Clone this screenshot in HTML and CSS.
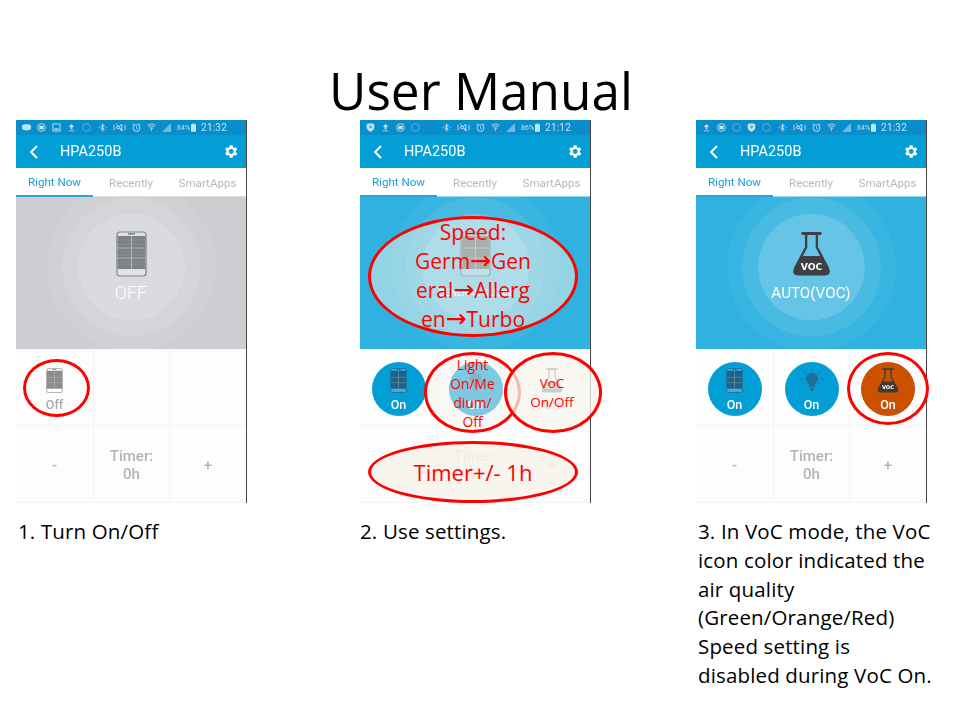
FILE: index.html
```html
<!DOCTYPE html>
<html lang="en">
<head>
<meta charset="utf-8">
<title>User Manual</title>
<link rel="stylesheet" href="styles.css">
</head>
<body>
<svg class="defs" aria-hidden="true">
  <symbol id="i-filter" viewBox="0 0 31 46">
    <rect x="1" y="1" width="29" height="44" rx="3" fill="#fff" fill-opacity=".2" stroke="currentColor" stroke-width="1.2"/>
    <rect x="1.6" y="5" width="27.8" height="33" fill="currentColor"/>
    <rect x="12" y="2" width="7" height="1.6" fill="currentColor"/>
    <path d="M15.5 5V38M1.5 17H29.5M1.5 27H29.5" stroke="#fff" stroke-opacity=".4" stroke-width="1.1" fill="none"/>
    <path d="M2 9H29M2 13H29M2 21H29M2 24H29M2 31H29M2 34H29" stroke="#fff" stroke-opacity=".1" stroke-width="1" fill="none"/>
  </symbol>
  <symbol id="i-flask" viewBox="0 0 40 46">
    <path d="M11 2H29" stroke="currentColor" stroke-width="3" stroke-linecap="round" fill="none"/>
    <path d="M14.5 3V16L3 38M25.5 3V16L37 38" stroke="currentColor" stroke-width="2.4" fill="none"/>
    <path d="M10 25H30L38.500 39Q40 45 34 45H6Q0 45 1.500 39Z" fill="currentColor"/>
    <text x="20" y="39.500" class="flask-text">VOC</text>
  </symbol>
  <symbol id="i-bulb" viewBox="0 0 26 26">
    <circle cx="13" cy="11" r="6.500" fill="currentColor"/>
    <path d="M10 15H16V20H10ZM11 21H15V24H11Z" fill="currentColor"/>
    <path d="M13 0V2.500M4.500 3L6.500 5M21.500 3L19.500 5M1 11H3.500M22.500 11H25M4 18L6 16.500M22 18L20 16.500" stroke="currentColor" stroke-width="1" fill="none"/>
  </symbol>
  <symbol id="i-gear" viewBox="0 0 24 24">
    <path fill="currentColor" d="M19.400 13a7.500 7.500 0 0 0 0-2l2.100-1.600-2-3.500-2.500 1a7.500 7.500 0 0 0-1.700-1L15 3.200h-4l-.4 2.700a7.500 7.500 0 0 0-1.700 1l-2.500-1-2 3.500L6.500 11a7.500 7.500 0 0 0 0 2l-2.100 1.600 2 3.500 2.500-1a7.500 7.500 0 0 0 1.700 1l.4 2.700h4l.4-2.700a7.500 7.500 0 0 0 1.700-1l2.500 1 2-3.500zM13 15.500a3.500 3.500 0 1 1 0-7 3.500 3.500 0 0 1 0 7z"/>
  </symbol>
  <symbol id="s-msg" viewBox="0 0 10 10"><rect x="0" y="1.500" width="10" height="6.500" rx="3" fill="currentColor"/></symbol>
  <symbol id="s-chat" viewBox="0 0 10 10"><circle cx="5" cy="5" r="4.300" fill="none" stroke="currentColor"/><rect x="2.500" y="3" width="5" height="4" rx="1" fill="currentColor"/></symbol>
  <symbol id="s-photo" viewBox="0 0 10 10"><rect x="1" y="1" width="8" height="8" fill="none" stroke="currentColor"/><rect x="2.500" y="6" width="5" height="1.500" fill="currentColor"/></symbol>
  <symbol id="s-up" viewBox="0 0 10 10"><path d="M5 1L8 4.500H6V7H4V4.500H2ZM2 8.200H8V9.300H2Z" fill="currentColor"/></symbol>
  <symbol id="s-ring" viewBox="0 0 10 10"><circle cx="5" cy="5" r="4.300" fill="none" stroke="currentColor" stroke-opacity=".45"/></symbol>
  <symbol id="s-shield" viewBox="0 0 10 10"><path d="M.8 1.200L5 .2 9.200 1.200V5Q9 8 5 9.800 1 8 .8 5Z" fill="currentColor"/><circle cx="5" cy="4.500" r="1.600" fill="#4ab0d8"/></symbol>
  <symbol id="s-bt" viewBox="0 0 10 10"><path d="M2.500 2.800L7 7 5 9V1L7 3 2.500 7.200" fill="none" stroke="currentColor" stroke-width="1"/><path d="M.5 5H1.500M8.500 5H9.500" stroke="currentColor"/></symbol>
  <symbol id="s-mute" viewBox="0 0 14 10"><path d="M1 2V8M13 2V8M3.500 1L11 9M4 4H6.500L9.500 1.500V8.500L6.500 6H4Z" fill="none" stroke="currentColor" stroke-width="1"/></symbol>
  <symbol id="s-alarm" viewBox="0 0 10 10"><circle cx="5" cy="5.500" r="3.800" fill="none" stroke="currentColor"/><path d="M5 3.500V5.800L6.500 6.800M.5 2L2.500 .5M9.500 2L7.500 .5" fill="none" stroke="currentColor" stroke-width=".9"/></symbol>
  <symbol id="s-wifi" viewBox="0 0 10 10"><path d="M.5 2.500Q5 -.8 9.500 2.500M2 4.300Q5 2.300 8 4.300M3.300 6Q5 4.800 6.700 6" fill="none" stroke="currentColor"/><path d="M4.200 6.500H5.800L5 9.800Z" fill="currentColor"/></symbol>
  <symbol id="s-signal" viewBox="0 0 10 10"><path d="M10 0V10H0Z" fill="currentColor" fill-opacity=".55"/></symbol>
  <symbol id="s-batt" viewBox="0 0 6 10"><path d="M2 0H4V1H6V10H0V1H2Z" fill="currentColor"/></symbol>
</svg>

<main class="slide">
  <h1 class="title">User Manual</h1>
  <div class="columns">

    <section class="col">
      <div class="phone">
        <div class="screen">
          <div class="status">
            <svg class="si"><use href="#s-msg"/></svg><svg class="si"><use href="#s-chat"/></svg><svg class="si"><use href="#s-photo"/></svg><svg class="si"><use href="#s-up"/></svg><svg class="si"><use href="#s-ring"/></svg>
            <span class="status-right"><svg class="si"><use href="#s-bt"/></svg><svg class="si wide"><use href="#s-mute"/></svg><svg class="si"><use href="#s-alarm"/></svg><svg class="si"><use href="#s-wifi"/></svg><svg class="si"><use href="#s-signal"/></svg><span class="pct">84%</span><svg class="si batt"><use href="#s-batt"/></svg><span class="time">21:32</span></span>
          </div>
          <header class="bar">
            <svg class="back" viewBox="0 0 10 14"><path d="M8 1L2 7L8 13" fill="none" stroke="currentColor" stroke-width="2"/></svg>
            <span class="bar-title">HPA250B</span>
            <svg class="gear"><use href="#i-gear"/></svg>
          </header>
          <nav class="tabs grey-line"><span class="tab active">Right Now</span><span class="tab">Recently</span><span class="tab">SmartApps</span></nav>
          <div class="hero off">
            <svg class="hero-icon filter-off"><use href="#i-filter"/></svg>
            <div class="hero-label">OFF</div>
          </div>
          <div class="controls">
            <div class="cell"><div class="tile"><svg class="tile-icon filter-tile-off"><use href="#i-filter"/></svg><span class="tile-label">Off</span></div></div>
            <div class="cell"></div>
            <div class="cell"></div>
            <div class="cell sign">-</div>
            <div class="cell timer">Timer:<br>0h</div>
            <div class="cell sign">+</div>
          </div>
        </div>
        <div class="mark mark-off"></div>
      </div>
      <p class="caption">1. Turn On/Off</p>
    </section>

    <section class="col">
      <div class="phone">
        <div class="screen">
          <div class="status">
            <svg class="si"><use href="#s-shield"/></svg><svg class="si"><use href="#s-up"/></svg><svg class="si"><use href="#s-chat"/></svg><svg class="si"><use href="#s-ring"/></svg>
            <span class="status-right"><svg class="si"><use href="#s-bt"/></svg><svg class="si wide"><use href="#s-mute"/></svg><svg class="si"><use href="#s-alarm"/></svg><svg class="si"><use href="#s-wifi"/></svg><svg class="si"><use href="#s-signal"/></svg><span class="pct">86%</span><svg class="si batt"><use href="#s-batt"/></svg><span class="time">21:12</span></span>
          </div>
          <header class="bar">
            <svg class="back" viewBox="0 0 10 14"><path d="M8 1L2 7L8 13" fill="none" stroke="currentColor" stroke-width="2"/></svg>
            <span class="bar-title">HPA250B</span>
            <svg class="gear"><use href="#i-gear"/></svg>
          </header>
          <nav class="tabs"><span class="tab active">Right Now</span><span class="tab">Recently</span><span class="tab">SmartApps</span></nav>
          <div class="hero on">
            <svg class="hero-icon filter-on"><use href="#i-filter"/></svg>
            <div class="hero-label tiny">GENERAL CLEAN</div>
          </div>
          <div class="controls">
            <div class="cell"><div class="tile lit"><svg class="tile-icon filter-tile-on"><use href="#i-filter"/></svg><span class="tile-label">On</span></div></div>
            <div class="cell"><div class="tile lit"><svg class="tile-icon bulb"><use href="#i-bulb"/></svg><span class="tile-label">On</span></div></div>
            <div class="cell"><div class="tile"><svg class="tile-icon flask-grey"><use href="#i-flask"/></svg><span class="tile-label">Off</span></div></div>
            <div class="cell sign">-</div>
            <div class="cell timer">Timer:<br>0h</div>
            <div class="cell sign">+</div>
          </div>
        </div>
        <div class="note note-speed"><div>Speed:<br>Germ<span class="arrow">→</span>Gen<br>eral<span class="arrow">→</span>Allerg<br>en<span class="arrow">→</span>Turbo</div></div>
        <div class="note note-light"><div>Light<br>On/Me<br>dium/<br>Off</div></div>
        <div class="note note-voc"><div>VoC<br>On/Off</div></div>
        <div class="note note-timer"><div>Timer+/- 1h</div></div>
      </div>
      <p class="caption flush">2. Use settings.</p>
    </section>

    <section class="col">
      <div class="phone">
        <div class="screen">
          <div class="status">
            <svg class="si"><use href="#s-up"/></svg><svg class="si"><use href="#s-chat"/></svg><svg class="si"><use href="#s-ring"/></svg><svg class="si"><use href="#s-shield"/></svg><svg class="si"><use href="#s-ring"/></svg>
            <span class="status-right"><svg class="si"><use href="#s-bt"/></svg><svg class="si wide"><use href="#s-mute"/></svg><svg class="si"><use href="#s-alarm"/></svg><svg class="si"><use href="#s-wifi"/></svg><svg class="si"><use href="#s-signal"/></svg><span class="pct">84%</span><svg class="si batt"><use href="#s-batt"/></svg><span class="time">21:32</span></span>
          </div>
          <header class="bar">
            <svg class="back" viewBox="0 0 10 14"><path d="M8 1L2 7L8 13" fill="none" stroke="currentColor" stroke-width="2"/></svg>
            <span class="bar-title">HPA250B</span>
            <svg class="gear"><use href="#i-gear"/></svg>
          </header>
          <nav class="tabs"><span class="tab active">Right Now</span><span class="tab">Recently</span><span class="tab">SmartApps</span></nav>
          <div class="hero on">
            <svg class="hero-icon flask-hero"><use href="#i-flask"/></svg>
            <div class="hero-label small">AUTO(VOC)</div>
          </div>
          <div class="controls">
            <div class="cell"><div class="tile lit"><svg class="tile-icon filter-tile-on"><use href="#i-filter"/></svg><span class="tile-label">On</span></div></div>
            <div class="cell"><div class="tile lit"><svg class="tile-icon bulb"><use href="#i-bulb"/></svg><span class="tile-label">On</span></div></div>
            <div class="cell"><div class="tile hot"><svg class="tile-icon flask-hot"><use href="#i-flask"/></svg><span class="tile-label">On</span></div></div>
            <div class="cell sign">-</div>
            <div class="cell timer">Timer:<br>0h</div>
            <div class="cell sign">+</div>
          </div>
        </div>
        <div class="mark mark-hot"></div>
      </div>
      <p class="caption">3. In VoC mode, the VoC<br>icon color indicated the<br>air quality<br>(Green/Orange/Red)<br>Speed setting is<br>disabled during VoC On.</p>
    </section>

  </div>
</main>
</body>
</html>
```

FILE: styles.css
```css
* { box-sizing: border-box; }
html, body { margin: 0; padding: 0; background: #fff; }
.defs { display: none; }
.slide { width: 960px; height: 720px; overflow: hidden; font-family: "Open Sans", "Liberation Sans", sans-serif; color: #000; }
.title { margin: 0; height: 120px; padding-top: 56px; text-align: center; font-size: 51.300px; line-height: 68px; font-weight: 400; padding-left: 2px; white-space: nowrap; }
.columns { display: grid; grid-template-columns: 344px 336px 264px; padding-left: 16px; }
.col { min-width: 0; }
.phone { position: relative; width: 231px; height: 383px; }
.screen { width: 231px; height: 383px; display: flex; flex-direction: column; border-right: 1px solid #444; background: #fdfdfd; font-family: Roboto, "Liberation Sans", sans-serif; filter: blur(.45px); overflow: hidden; }

.status { height: 15px; flex: none; background: #0a8ecb; color: #bfe4f3; display: flex; align-items: center; gap: 6px; padding: 0 0 0 6px; }
.si { width: 9px; height: 9px; flex: none; }
.si.wide { width: 13px; }
.si.batt { width: 5px; margin-left: -4px; }
.status-right { margin-left: auto; display: flex; align-items: center; gap: 6px; padding-right: 19px; }
.pct { font-size: 7px; margin-right: -1px; }
.time { font-size: 10px; letter-spacing: .2px; margin-left: -1px; }

.bar { height: 33px; flex: none; background: #049ed6; color: #fff; display: flex; align-items: center; padding: 0 7px 0 13px; }
.back { width: 10px; height: 14px; flex: none; }
.bar-title { margin-left: 21px; font-size: 14.500px; }
.gear { width: 17px; height: 17px; margin-left: auto; }

.tabs { height: 29px; flex: none; background: #fff; display: grid; grid-template-columns: 77px 76px 77px; font-size: 11.600px; color: #b8b8b8; border-bottom: 1px solid #9fd9ef; }
.tabs.grey-line { border-bottom-color: #dcdcdc; }
.tab { display: flex; align-items: center; justify-content: center; height: 29px; padding-top: 1px; white-space: nowrap; }
.tab.active { color: #1f9fd6; border-bottom: 2px solid #27a5d9; }

.hero { height: 152px; flex: none; display: flex; flex-direction: column; align-items: center; padding: 34px 0 0; color: #fff; }
.hero.off { background: radial-gradient(circle at 115.500px 70px, #dadbde 53px, #d4d5d9 53.500px 69px, #d0d1d5 69.500px 84px, #cdced2 84.500px); }
.hero.on { background: radial-gradient(circle at 115.500px 70px, #66c4e6 53px, #49bbe2 53.500px 69px, #38b5e1 69.500px 84px, #30b2e0 84.500px); }
.hero-icon { width: 31px; height: 46px; flex: none; }
.hero-icon.flask-hero { width: 39px; color: #3d3f42; }
.hero-label { font-size: 18px; line-height: 32px; font-weight: 300; white-space: nowrap; }
.hero-label.small { font-size: 15.200px; font-weight: 400; }
.hero-label.tiny { font-size: 9.500px; font-weight: 400; }
.filter-off { color: #7e8184; }
.filter-on { color: #55686f; }

.controls { flex: 1; margin-top: 1px; display: grid; grid-template-columns: 78px 76px 76px; grid-template-rows: 76px 77px; }
.cell { display: flex; align-items: center; justify-content: center; padding-top: 2px; border-right: 1px solid #f3f4f5; border-bottom: 1px solid #f3f4f5; color: #b3b3b3; }
.cell:nth-child(3n) { border-right: 0; }
.tile { width: 54px; height: 54px; border-radius: 50%; display: flex; flex-direction: column; align-items: center; padding-top: 6px; }
.tile-icon { width: 17px; height: 25px; flex: none; }
.tile-label { font-size: 12.500px; line-height: 15px; margin-top: 4px; font-weight: 500; color: #a9a9a9; }
.tile.lit { background: #049ed6; }
.tile.hot { background: #cb5000; }
.tile.lit .tile-label, .tile.hot .tile-label { color: #fff; }
.filter-tile-off { color: #8a8a8a; }
.filter-tile-on { color: #1b5f83; }
.bulb { width: 24px; color: #1b6f98; }
.flask-grey { width: 22px; color: #555; }
.flask-hot { width: 22px; color: #3f3b39; }
.flask-text { font: 700 9.500px "DejaVu Sans", sans-serif; fill: #fff; text-anchor: middle; }
.sign { font-size: 15px; font-weight: 500; }
.timer { font-size: 15px; line-height: 18px; font-weight: 500; text-align: center; }

.mark, .note { position: absolute; border-radius: 50%; border: 3px solid #f00; }
.mark-off { left: 7px; top: 239px; width: 67px; height: 58px; }
.mark-hot { left: 151px; top: 232px; width: 82px; height: 73px; }
.note { display: flex; align-items: center; justify-content: center; text-align: center; color: #f00; background: rgba(246, 244, 236, .5); font-family: "Open Sans", "Liberation Sans", sans-serif; white-space: nowrap; }
.note-speed { left: 8px; top: 96px; width: 210px; height: 121px; font-size: 21px; line-height: 29px; padding-bottom: 2px; }
.arrow { font-family: "DejaVu Sans", sans-serif; font-size: 25px; line-height: 20px; }
.note-light { left: 64px; top: 232px; width: 97px; height: 81px; font-size: 13.800px; line-height: 19px; }
.note-voc { left: 144px; top: 232px; width: 98px; height: 81px; font-size: 13.500px; line-height: 19px; padding-right: 2px; background: rgba(246, 244, 236, .75); }
.note-timer { left: 8px; top: 321px; width: 210px; height: 62px; font-size: 22px; line-height: 29px; background: rgba(246, 244, 236, .88); }

.caption { margin: 14px 0 0 2px; font-size: 20.500px; letter-spacing: .15px; line-height: 28.800px; white-space: nowrap; }
.caption.flush { margin-left: 0; }
```
